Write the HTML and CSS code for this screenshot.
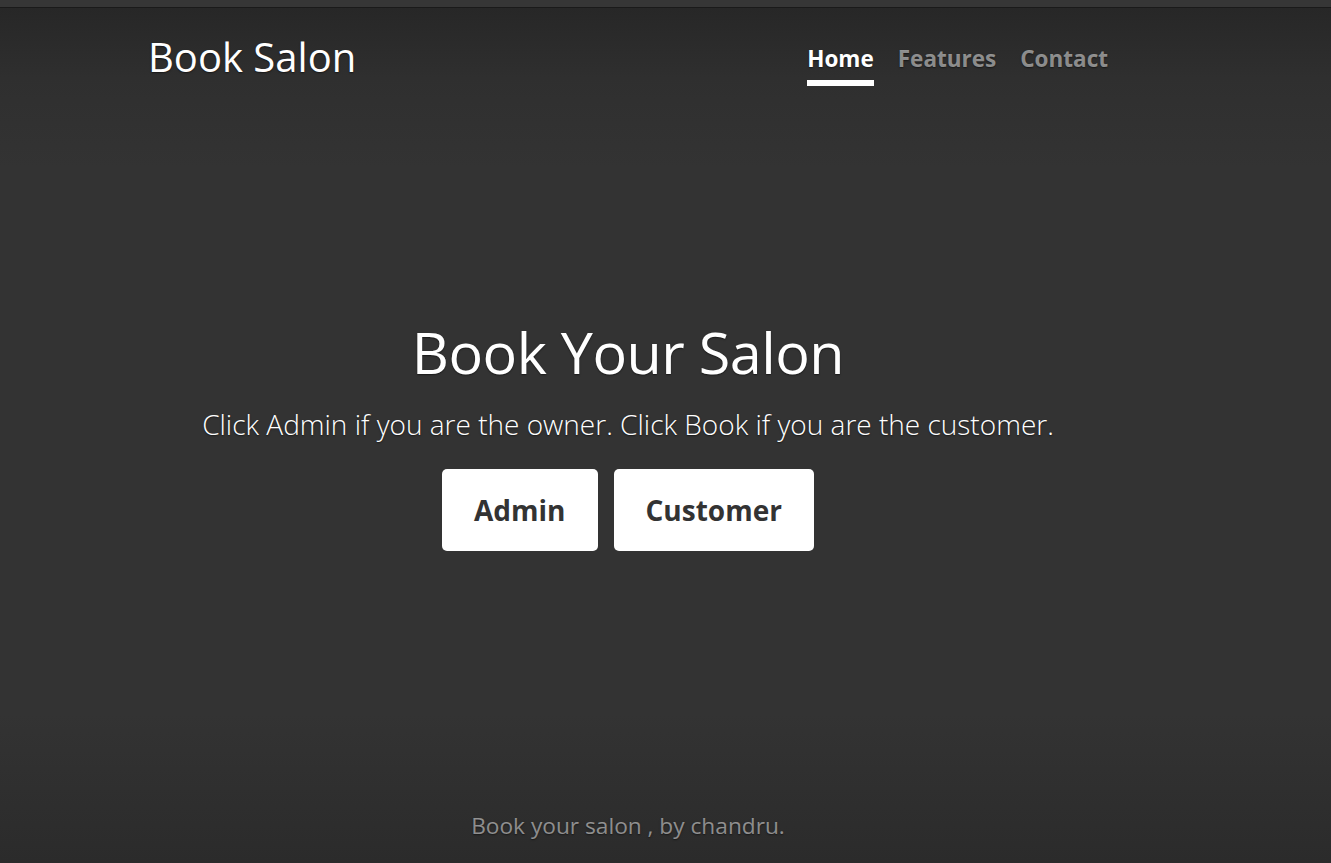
FILE: index.html
```html
<!DOCTYPE html>
<html lang="en">
<head>
<meta charset="utf-8">
<title>Book Salon</title>
<link rel="stylesheet" href="styles.css">
</head>
<body>
<div class="topbar"></div>
<div class="cover">
  <div class="container">
    <header class="masthead">
      <h3 class="brand">Book Salon</h3>
      <nav class="nav">
        <a class="nav-link active" href="#">Home</a>
        <a class="nav-link" href="#">Features</a>
        <a class="nav-link" href="#">Contact</a>
      </nav>
    </header>
    <main class="hero">
      <h1 class="hero-title">Book Your Salon</h1>
      <p class="lead">Click Admin if you are the owner. Click Book if you are the customer.</p>
      <div class="actions">
        <a class="btn" href="#">Admin</a>
        <a class="btn" href="#">Customer</a>
      </div>
    </main>
    <footer class="footer">
      <p>Book your salon , by chandru.</p>
    </footer>
  </div>
</div>
</body>
</html>
```

FILE: styles.css
```css
* { box-sizing: border-box; }
html, body { margin: 0; padding: 0; height: 100%; }
body {
  background: #333;
  color: #fff;
  font-family: "Open Sans", "Noto Sans", sans-serif;
  display: flex;
  flex-direction: column;
  overflow: hidden;
}
.topbar {
  height: 8px;
  background: #363636;
  border-bottom: 1px solid #1a1a1a;
  flex: none;
}
.cover {
  flex: 1;
  background: linear-gradient(to bottom, #272727 0, #2f2f2f 70px, #333 160px, #333 calc(100% - 150px), #2b2b2b 100%);
  text-shadow: 0 .05rem .1rem rgba(0, 0, 0, .5);
}
.container {
  width: 960px;
  margin-left: 148px;
  height: 100%;
  display: flex;
  flex-direction: column;
}
.masthead {
  display: flex;
  justify-content: space-between;
  align-items: flex-start;
  padding-top: 25px;
}
.brand {
  margin: 0;
  font-size: 40px;
  font-weight: 400;
  line-height: 1.2;
}
.nav {
  display: flex;
  gap: 24px;
  padding-top: 10.5px;
}
.nav-link {
  color: rgba(255, 255, 255, .5);
  text-decoration: none;
  font-weight: 700;
  font-size: 22.5px;
  line-height: 30px;
  padding-bottom: 6.5px;
  border-bottom: 6px solid transparent;
}
.nav-link.active {
  color: #fff;
  border-bottom-color: #fff;
}
.hero {
  text-align: center;
  margin-top: 232px;
}
.hero-title {
  margin: 0;
  font-size: 57.5px;
  font-weight: 400;
  line-height: 1.2;
  letter-spacing: -0.5px;
}
.lead {
  margin: 16px 0 0;
  font-size: 28px;
  font-weight: 300;
  line-height: 42px;
}
.actions {
  display: flex;
  justify-content: center;
  gap: 16px;
  margin-top: 24px;
}
.btn {
  display: block;
  background: #fff;
  color: #333;
  text-shadow: none;
  text-decoration: none;
  font-weight: 700;
  font-size: 28px;
  line-height: 34px;
  padding: 24px 32px;
  border-radius: 5px;
}
.footer {
  margin-top: auto;
  text-align: center;
  color: rgba(255, 255, 255, .5);
  padding-bottom: 20px;
}
.footer p {
  margin: 0;
  font-size: 22.7px;
  line-height: 34px;
}
```
